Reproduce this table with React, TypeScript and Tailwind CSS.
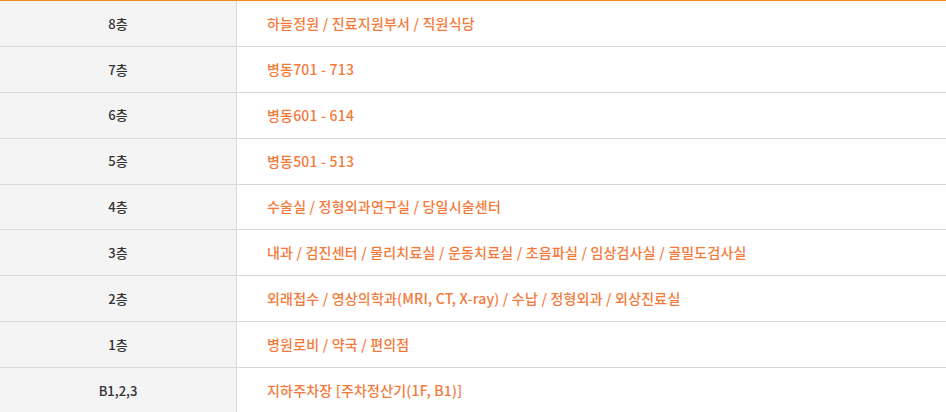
import React from "react";

const rows: [string, string][] = [
  ["8층", "하늘정원 / 진료지원부서 / 직원식당"],
  ["7층", "병동701 - 713"],
  ["6층", "병동601 - 614"],
  ["5층", "병동501 - 513"],
  ["4층", "수술실 / 정형외과연구실 / 당일시술센터"],
  ["3층", "내과 / 검진센터 / 물리치료실 / 운동치료실 / 초음파실 / 임상검사실 / 골밀도검사실"],
  ["2층", "외래접수 / 영상의학과(MRI, CT, X-ray) / 수납 / 정형외과 / 외상진료실"],
  ["1층", "병원로비 / 약국 / 편의점"],
  ["B1,2,3", "지하주차장 [주차정산기(1F, B1)]"],
];

export default function App() {
  return (
    <div
      className="w-[946px] bg-white border-t border-[#f08a1c] text-[14px] font-medium"
      style={{ fontFamily: '"Noto Sans CJK KR", "Noto Sans", sans-serif' }}
    >
      {rows.map(([f, d]) => (
        <div key={f} className="flex h-[45.875px] border-b border-[#d9d9d9]">
          <div className="w-[237px] shrink-0 bg-[#f4f4f4] border-r border-[#d9d9d9] flex items-center justify-center text-[#333] text-[13px]">
            {f}
          </div>
          <div className="flex-1 flex items-center pl-[30px] text-[#f47a3a] tracking-[0.2px]">{d}</div>
        </div>
      ))}
    </div>
  );
}
